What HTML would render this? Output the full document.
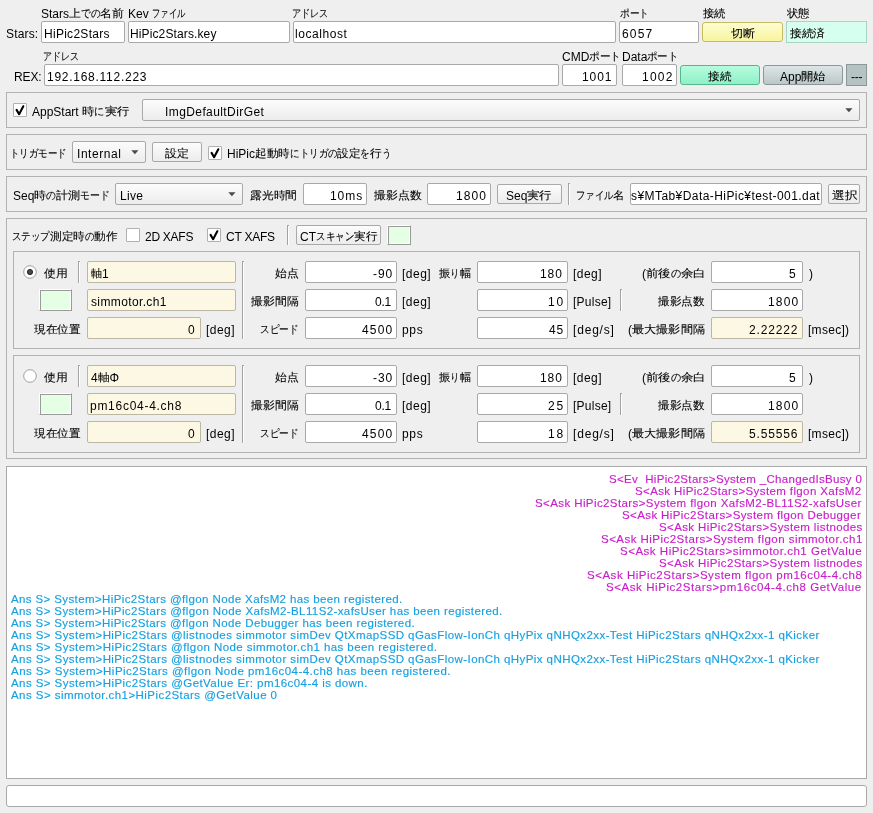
<!DOCTYPE html>
<html><head><meta charset="utf-8"><style>
html,body{margin:0;padding:0;}
body{width:873px;height:813px;background:#efefef;position:relative;overflow:hidden;font-family:"Liberation Sans",sans-serif;font-size:12px;color:#000;}
.a{position:absolute;box-sizing:border-box;}
.t{position:absolute;white-space:pre;line-height:14px;font-size:12px;will-change:transform;}
.ed{background:#fff;border:1px solid #a9a9a9;border-radius:2px;}
.ye{background:#fdf8e4;border-color:#bbb7a3;}
.le{border-radius:3px;}
.grp{border:1px solid #b2b2b2;}
.btn,.cmb{border:1px solid #a9a9a9;border-radius:2px;background:linear-gradient(#fcfcfc,#ececec);}
.btny{border:1px solid #c4bc62;border-radius:3px;background:linear-gradient(#fdfdd2,#f8f49e);}
.btng{border:1px solid #52b98a;border-radius:3px;background:linear-gradient(#b6fcde,#8ff0c6);}
.btngr{border:1px solid #8c9898;border-radius:3px;background:linear-gradient(#dde6e6,#bbc7c7);}
.dash{background:#b5c3c3;border:1px solid #8c9898;}
.stat{background:#d6fff0;border:1px solid #a6d6c2;}
.gbox{background:#e4ffe4;border:1px solid #fff;border-right-color:#9a9a9a;border-bottom-color:#9a9a9a;box-shadow:inset 1px 1px #9a9a9a,inset -1px -1px #fff;}
.cb{background:#fff;border:1px solid #b0b0b0;border-radius:1px;}
.vsep{width:2px;border-left:1px solid #a2a2a2;border-top:1px solid #a2a2a2;background:#fff;}
.log{background:#fff;border:1px solid #a9a9a9;}
.j{font-size:11px;-webkit-text-stroke:0.1px currentColor;}
.jb{display:inline-block;position:relative;top:-1px;}
.ji{display:inline-block;transform-origin:0 50%;}
.mg{color:#c81ec8;font-size:11.5px;-webkit-text-stroke:0.15px #c81ec8;}
.bl{color:#15a0e0;font-size:11.5px;-webkit-text-stroke:0.15px #15a0e0;}
</style></head><body>
<div class="t " style="left:40.60px;top:7px;">Stars<span class="jb" style="width:11.84px"><span class="j ji" style="transform:scaleX(1.0764)">上</span></span><span class="jb" style="width:19.42px"><span class="j ji" style="transform:scaleX(0.8827)">での</span></span><span class="jb" style="width:23.68px"><span class="j ji" style="transform:scaleX(1.0764)">名前</span></span></div>
<div class="t " style="left:127.80px;top:7px;">Kev <span class="jb" style="width:33.28px"><span class="j ji" style="transform:scaleX(0.7564)">ファイル</span></span></div>
<div class="t " style="left:292.40px;top:7px;"><span class="jb" style="width:36.58px"><span class="j ji" style="transform:scaleX(0.8314)">アドレス</span></span></div>
<div class="t " style="left:619.70px;top:7px;"><span class="jb" style="width:28.96px"><span class="j ji" style="transform:scaleX(0.8776)">ポート</span></span></div>
<div class="t " style="left:702.60px;top:7px;"><span class="jb" style="width:22.60px"><span class="j ji" style="transform:scaleX(1.0273)">接続</span></span></div>
<div class="t " style="left:786.50px;top:7px;"><span class="jb" style="width:22.70px"><span class="j ji" style="transform:scaleX(1.0318)">状態</span></span></div>
<div class="t " style="left:5.50px;top:27px;letter-spacing:0.160px;">Stars:</div>
<div class="a ed" style="left:41px;top:21px;width:84px;height:22px;"></div>
<div class="t " style="left:43.60px;top:27px;letter-spacing:0.280px;">HiPic2Stars</div>
<div class="a ed" style="left:128px;top:21px;width:162px;height:22px;"></div>
<div class="t " style="left:130.30px;top:27px;letter-spacing:0.121px;">HiPic2Stars.key</div>
<div class="a ed" style="left:293px;top:21px;width:323px;height:22px;"></div>
<div class="t " style="left:295.40px;top:27px;letter-spacing:0.550px;">localhost</div>
<div class="a ed" style="left:619px;top:21px;width:80px;height:22px;"></div>
<div class="t " style="left:621.70px;top:27px;letter-spacing:1.167px;">6057</div>
<div class="a btny" style="left:702px;top:22px;width:81px;height:20px;"></div>
<div class="t " style="left:731.00px;top:27px;"><span class="jb" style="width:24.20px"><span class="j ji" style="transform:scaleX(1.1000)">切断</span></span></div>
<div class="a stat" style="left:786px;top:21px;width:81px;height:22px;"></div>
<div class="t " style="left:790.30px;top:27px;"><span class="jb" style="width:35.20px"><span class="j ji" style="transform:scaleX(1.0667)">接続済</span></span></div>
<div class="t " style="left:43.40px;top:50px;"><span class="jb" style="width:35.78px"><span class="j ji" style="transform:scaleX(0.8132)">アドレス</span></span></div>
<div class="t " style="left:561.70px;top:50px;">CMD<span class="jb" style="width:31.96px"><span class="j ji" style="transform:scaleX(0.9685)">ポート</span></span></div>
<div class="t " style="left:621.70px;top:50px;">Data<span class="jb" style="width:31.46px"><span class="j ji" style="transform:scaleX(0.9533)">ポート</span></span></div>
<div class="t " style="left:13.60px;top:70px;letter-spacing:-0.100px;">REX:</div>
<div class="a ed" style="left:44px;top:64px;width:515px;height:22px;"></div>
<div class="t " style="left:46.90px;top:70px;letter-spacing:0.736px;">192.168.112.223</div>
<div class="a ed" style="left:562px;top:64px;width:55px;height:22px;"></div>
<div class="t " style="left:581.80px;top:70px;letter-spacing:0.933px;">1001</div>
<div class="a ed" style="left:622px;top:64px;width:55px;height:22px;"></div>
<div class="t " style="left:641.80px;top:70px;letter-spacing:1.233px;">1002</div>
<div class="a btng" style="left:680px;top:65px;width:80px;height:20px;"></div>
<div class="t " style="left:708.30px;top:70px;"><span class="jb" style="width:23.20px"><span class="j ji" style="transform:scaleX(1.0545)">接続</span></span></div>
<div class="a btngr" style="left:763px;top:65px;width:80px;height:20px;"></div>
<div class="t " style="left:780.00px;top:70px;">App<span class="jb" style="width:24.60px"><span class="j ji" style="transform:scaleX(1.1182)">開始</span></span></div>
<div class="a dash" style="left:846px;top:64px;width:21px;height:22px;"></div>
<div class="t " style="left:850.50px;top:70px;letter-spacing:-0.300px;">---</div>
<div class="a grp" style="left:6px;top:92px;width:861px;height:36px;"></div>
<div class="a cb" style="left:13px;top:103px;width:14px;height:14px;"></div>
<svg class="a" style="left:13px;top:103px" width="14" height="14" viewBox="0 0 14 14"><path d="M3.6 6.9 L6.1 11.2 L10.3 3.3" fill="none" stroke="#000" stroke-width="2.1" stroke-linejoin="round" stroke-linecap="round"/></svg>
<div class="t " style="left:32.30px;top:105px;">AppStart <span class="jb" style="width:12.39px"><span class="j ji" style="transform:scaleX(1.1261)">時</span></span><span class="jb" style="width:10.16px"><span class="j ji" style="transform:scaleX(0.9234)">に</span></span><span class="jb" style="width:24.77px"><span class="j ji" style="transform:scaleX(1.1261)">実行</span></span></div>
<div class="a cmb" style="left:142px;top:99px;width:718px;height:22px;"></div>
<div class="t " style="left:165.00px;top:105px;letter-spacing:0.407px;">ImgDefaultDirGet</div>
<svg class="a" style="left:845px;top:108px" width="8" height="5" viewBox="0 0 8 5"><path d="M0.3 0.3 L7.5 0.3 L3.9 4.3 Z" fill="#4a4a4a"/></svg>
<div class="a grp" style="left:6px;top:134px;width:861px;height:36px;"></div>
<div class="t " style="left:10.20px;top:147px;"><span class="jb" style="width:56.92px"><span class="j ji" style="transform:scaleX(0.8624)">トリガモード</span></span></div>
<div class="a cmb" style="left:72px;top:141px;width:74px;height:22px;"></div>
<div class="t " style="left:76.50px;top:147px;letter-spacing:0.543px;">Internal</div>
<svg class="a" style="left:131px;top:150px" width="8" height="5" viewBox="0 0 8 5"><path d="M0.3 0.3 L7.5 0.3 L3.9 4.3 Z" fill="#4a4a4a"/></svg>
<div class="a btn" style="left:152px;top:142px;width:50px;height:20px;"></div>
<div class="t " style="left:165.30px;top:147px;"><span class="jb" style="width:23.90px"><span class="j ji" style="transform:scaleX(1.0864)">設定</span></span></div>
<div class="a cb" style="left:208px;top:146px;width:14px;height:14px;"></div>
<svg class="a" style="left:208px;top:146px" width="14" height="14" viewBox="0 0 14 14"><path d="M3.6 6.9 L6.1 11.2 L10.3 3.3" fill="none" stroke="#000" stroke-width="2.1" stroke-linejoin="round" stroke-linecap="round"/></svg>
<div class="t " style="left:226.80px;top:147px;">HiPic<span class="jb" style="width:34.76px"><span class="j ji" style="transform:scaleX(1.0534)">起動時</span></span><span class="jb" style="width:47.51px"><span class="j ji" style="transform:scaleX(0.8638)">にトリガの</span></span><span class="jb" style="width:23.18px"><span class="j ji" style="transform:scaleX(1.0534)">設定</span></span><span class="jb" style="width:9.50px"><span class="j ji" style="transform:scaleX(0.8638)">を</span></span><span class="jb" style="width:11.59px"><span class="j ji" style="transform:scaleX(1.0534)">行</span></span><span class="jb" style="width:9.50px"><span class="j ji" style="transform:scaleX(0.8638)">う</span></span></div>
<div class="a grp" style="left:6px;top:176px;width:861px;height:36px;"></div>
<div class="t " style="left:12.50px;top:189px;">Seq<span class="jb" style="width:12.04px"><span class="j ji" style="transform:scaleX(1.0941)">時</span></span><span class="jb" style="width:9.87px"><span class="j ji" style="transform:scaleX(0.8972)">の</span></span><span class="jb" style="width:24.07px"><span class="j ji" style="transform:scaleX(1.0941)">計測</span></span><span class="jb" style="width:29.61px"><span class="j ji" style="transform:scaleX(0.8972)">モード</span></span></div>
<div class="a cmb" style="left:115px;top:183px;width:128px;height:22px;"></div>
<div class="t " style="left:119.70px;top:189px;letter-spacing:0.300px;">Live</div>
<svg class="a" style="left:228px;top:192px" width="8" height="5" viewBox="0 0 8 5"><path d="M0.3 0.3 L7.5 0.3 L3.9 4.3 Z" fill="#4a4a4a"/></svg>
<div class="t " style="left:250.00px;top:189px;"><span class="jb" style="width:47.10px"><span class="j ji" style="transform:scaleX(1.0705)">露光時間</span></span></div>
<div class="a ed" style="left:303px;top:183px;width:64px;height:22px;"></div>
<div class="t " style="left:330.20px;top:189px;letter-spacing:0.933px;">10ms</div>
<div class="t " style="left:373.90px;top:189px;"><span class="jb" style="width:47.60px"><span class="j ji" style="transform:scaleX(1.0818)">撮影点数</span></span></div>
<div class="a ed" style="left:427px;top:183px;width:64px;height:22px;"></div>
<div class="t " style="left:456.00px;top:189px;letter-spacing:1.100px;">1800</div>
<div class="a btn" style="left:497px;top:184px;width:65px;height:20px;"></div>
<div class="t " style="left:506.00px;top:189px;">Seq<span class="jb" style="width:24.80px"><span class="j ji" style="transform:scaleX(1.1273)">実行</span></span></div>
<div class="a vsep" style="left:568px;top:183px;height:22px"></div>
<div class="t " style="left:576.00px;top:189px;"><span class="jb" style="width:37.46px"><span class="j ji" style="transform:scaleX(0.8514)">ファイル</span></span><span class="jb" style="width:11.42px"><span class="j ji" style="transform:scaleX(1.0382)">名</span></span></div>
<div class="a ed" style="left:630px;top:183px;width:192px;height:22px;"></div>
<div class="t " style="left:630.70px;top:189px;letter-spacing:0.431px;">s¥MTab¥Data-HiPic¥test-001.dat</div>
<div class="a btn" style="left:828px;top:184px;width:32px;height:20px;"></div>
<div class="t " style="left:832.00px;top:189px;"><span class="jb" style="width:25.40px"><span class="j ji" style="transform:scaleX(1.1545)">選択</span></span></div>
<div class="a grp" style="left:6px;top:218px;width:861px;height:241px;"></div>
<div class="t " style="left:12.20px;top:230px;"><span class="jb" style="width:37.99px"><span class="j ji" style="transform:scaleX(0.8634)">ステップ</span></span><span class="jb" style="width:34.75px"><span class="j ji" style="transform:scaleX(1.0529)">測定時</span></span><span class="jb" style="width:9.50px"><span class="j ji" style="transform:scaleX(0.8634)">の</span></span><span class="jb" style="width:23.16px"><span class="j ji" style="transform:scaleX(1.0529)">動作</span></span></div>
<div class="a cb" style="left:126px;top:228px;width:14px;height:14px;"></div>
<div class="t " style="left:144.90px;top:230px;letter-spacing:-0.267px;">2D XAFS</div>
<div class="a cb" style="left:207px;top:228px;width:14px;height:14px;"></div>
<svg class="a" style="left:207px;top:228px" width="14" height="14" viewBox="0 0 14 14"><path d="M3.6 6.9 L6.1 11.2 L10.3 3.3" fill="none" stroke="#000" stroke-width="2.1" stroke-linejoin="round" stroke-linecap="round"/></svg>
<div class="t " style="left:225.70px;top:230px;letter-spacing:-0.233px;">CT XAFS</div>
<div class="a vsep" style="left:287px;top:225px;height:20px"></div>
<div class="a btn" style="left:296px;top:225px;width:85px;height:20px;"></div>
<div class="t " style="left:299.60px;top:230px;">CT<span class="jb" style="width:38.07px"><span class="j ji" style="transform:scaleX(0.8652)">スキャン</span></span><span class="jb" style="width:23.21px"><span class="j ji" style="transform:scaleX(1.0551)">実行</span></span></div>
<div class="a gbox" style="left:387px;top:225px;width:24px;height:20px;"></div>
<div class="a grp" style="left:13px;top:251px;width:847px;height:98px;"></div>
<svg class="a" style="left:23px;top:265px" width="14" height="14" viewBox="0 0 14 14"><circle cx="7" cy="7" r="6.3" fill="#fff" stroke="#969696" stroke-width="0.9"/><circle cx="7" cy="7" r="2.6" fill="#4a4a4a" stroke="#1a1a1a" stroke-width="0.9"/></svg>
<div class="t " style="left:43.70px;top:267px;"><span class="jb" style="width:23.70px"><span class="j ji" style="transform:scaleX(1.0773)">使用</span></span></div>
<div class="a vsep" style="left:78px;top:261px;height:22px"></div>
<div class="a ed ye" style="left:87px;top:261px;width:149px;height:22px;"></div>
<div class="t " style="left:90.60px;top:267px;"><span class="jb" style="width:11.10px"><span class="j ji" style="transform:scaleX(1.0091)">軸</span></span>1</div>
<div class="a gbox" style="left:39px;top:289px;width:33px;height:22px;"></div>
<div class="a ed ye" style="left:87px;top:289px;width:149px;height:22px;"></div>
<div class="t " style="left:90.60px;top:295px;letter-spacing:0.373px;">simmotor.ch1</div>
<div class="t " style="left:34.00px;top:323px;"><span class="jb" style="width:46.40px"><span class="j ji" style="transform:scaleX(1.0545)">現在位置</span></span></div>
<div class="a ed ye" style="left:87px;top:317px;width:114px;height:22px;"></div>
<div class="t " style="left:188.20px;top:323px;">0</div>
<div class="t " style="left:206.30px;top:323px;letter-spacing:0.475px;">[deg]</div>
<div class="a vsep" style="left:242px;top:261px;height:78px"></div>
<div class="t " style="left:275.30px;top:267px;"><span class="jb" style="width:23.70px"><span class="j ji" style="transform:scaleX(1.0773)">始点</span></span></div>
<div class="t " style="left:251.40px;top:295px;"><span class="jb" style="width:47.60px"><span class="j ji" style="transform:scaleX(1.0818)">撮影間隔</span></span></div>
<div class="t " style="left:260.40px;top:323px;"><span class="jb" style="width:38.68px"><span class="j ji" style="transform:scaleX(0.8791)">スピード</span></span></div>
<div class="a ed" style="left:305px;top:261px;width:92px;height:22px;"></div>
<div class="t " style="left:373.20px;top:267px;letter-spacing:0.900px;">-90</div>
<div class="a ed" style="left:305px;top:289px;width:92px;height:22px;"></div>
<div class="t " style="left:374.50px;top:295px;letter-spacing:-0.250px;">0.1</div>
<div class="a ed" style="left:305px;top:317px;width:92px;height:22px;"></div>
<div class="t " style="left:362.20px;top:323px;letter-spacing:1.167px;">4500</div>
<div class="t " style="left:402.40px;top:267px;letter-spacing:0.500px;">[deg]</div>
<div class="t " style="left:402.40px;top:295px;letter-spacing:0.500px;">[deg]</div>
<div class="t " style="left:402.40px;top:323px;letter-spacing:0.700px;">pps</div>
<div class="t " style="left:438.70px;top:267px;"><span class="jb" style="width:11.28px"><span class="j ji" style="transform:scaleX(1.0258)">振</span></span><span class="jb" style="width:9.25px"><span class="j ji" style="transform:scaleX(0.8411)">り</span></span><span class="jb" style="width:11.28px"><span class="j ji" style="transform:scaleX(1.0258)">幅</span></span></div>
<div class="a ed" style="left:477px;top:261px;width:91px;height:22px;"></div>
<div class="t " style="left:540.10px;top:267px;letter-spacing:0.950px;">180</div>
<div class="a ed" style="left:477px;top:289px;width:91px;height:22px;"></div>
<div class="t " style="left:547.50px;top:295px;letter-spacing:1.800px;">10</div>
<div class="a ed" style="left:477px;top:317px;width:91px;height:22px;"></div>
<div class="t " style="left:548.50px;top:323px;letter-spacing:0.800px;">45</div>
<div class="t " style="left:573.40px;top:267px;letter-spacing:0.450px;">[deg]</div>
<div class="t " style="left:573.40px;top:295px;letter-spacing:0.250px;">[Pulse]</div>
<div class="t " style="left:573.40px;top:323px;letter-spacing:0.817px;">[deg/s]</div>
<div class="a vsep" style="left:620px;top:289px;height:22px"></div>
<div class="t " style="left:641.50px;top:267px;">(<span class="jb" style="width:24.95px"><span class="j ji" style="transform:scaleX(1.1339)">前後</span></span><span class="jb" style="width:10.23px"><span class="j ji" style="transform:scaleX(0.9298)">の</span></span><span class="jb" style="width:24.95px"><span class="j ji" style="transform:scaleX(1.1339)">余白</span></span></div>
<div class="t " style="left:658.00px;top:295px;"><span class="jb" style="width:46.60px"><span class="j ji" style="transform:scaleX(1.0591)">撮影点数</span></span></div>
<div class="t " style="left:627.70px;top:323px;">(<span class="jb" style="width:72.90px"><span class="j ji" style="transform:scaleX(1.1045)">最大撮影間隔</span></span></div>
<div class="a ed" style="left:711px;top:261px;width:92px;height:22px;"></div>
<div class="t " style="left:789.20px;top:267px;">5</div>
<div class="a ed" style="left:711px;top:289px;width:92px;height:22px;"></div>
<div class="t " style="left:767.60px;top:295px;letter-spacing:1.167px;">1800</div>
<div class="a ed ye" style="left:711px;top:317px;width:92px;height:22px;"></div>
<div class="t " style="left:749.00px;top:323px;letter-spacing:0.850px;">2.22222</div>
<div class="t " style="left:809.00px;top:267px;">)</div>
<div class="t " style="left:808.00px;top:323px;letter-spacing:0.283px;">[msec])</div>
<div class="a grp" style="left:13px;top:355px;width:847px;height:98px;"></div>
<svg class="a" style="left:23px;top:369px" width="14" height="14" viewBox="0 0 14 14"><circle cx="7" cy="7" r="6.3" fill="#fff" stroke="#969696" stroke-width="0.9"/></svg>
<div class="t " style="left:43.70px;top:371px;"><span class="jb" style="width:23.70px"><span class="j ji" style="transform:scaleX(1.0773)">使用</span></span></div>
<div class="a vsep" style="left:78px;top:365px;height:22px"></div>
<div class="a ed ye" style="left:87px;top:365px;width:149px;height:22px;"></div>
<div class="t " style="left:90.60px;top:371px;">4<span class="jb" style="width:11.70px"><span class="j ji" style="transform:scaleX(1.0636)">軸</span></span>Φ</div>
<div class="a gbox" style="left:39px;top:393px;width:33px;height:22px;"></div>
<div class="a ed ye" style="left:87px;top:393px;width:149px;height:22px;"></div>
<div class="t " style="left:89.60px;top:399px;letter-spacing:0.725px;">pm16c04-4.ch8</div>
<div class="t " style="left:34.00px;top:427px;"><span class="jb" style="width:46.40px"><span class="j ji" style="transform:scaleX(1.0545)">現在位置</span></span></div>
<div class="a ed ye" style="left:87px;top:421px;width:114px;height:22px;"></div>
<div class="t " style="left:188.20px;top:427px;">0</div>
<div class="t " style="left:206.30px;top:427px;letter-spacing:0.475px;">[deg]</div>
<div class="a vsep" style="left:242px;top:365px;height:78px"></div>
<div class="t " style="left:275.30px;top:371px;"><span class="jb" style="width:23.70px"><span class="j ji" style="transform:scaleX(1.0773)">始点</span></span></div>
<div class="t " style="left:251.40px;top:399px;"><span class="jb" style="width:47.60px"><span class="j ji" style="transform:scaleX(1.0818)">撮影間隔</span></span></div>
<div class="t " style="left:260.40px;top:427px;"><span class="jb" style="width:38.68px"><span class="j ji" style="transform:scaleX(0.8791)">スピード</span></span></div>
<div class="a ed" style="left:305px;top:365px;width:92px;height:22px;"></div>
<div class="t " style="left:373.20px;top:371px;letter-spacing:0.900px;">-30</div>
<div class="a ed" style="left:305px;top:393px;width:92px;height:22px;"></div>
<div class="t " style="left:374.50px;top:399px;letter-spacing:-0.250px;">0.1</div>
<div class="a ed" style="left:305px;top:421px;width:92px;height:22px;"></div>
<div class="t " style="left:362.20px;top:427px;letter-spacing:1.167px;">4500</div>
<div class="t " style="left:402.40px;top:371px;letter-spacing:0.500px;">[deg]</div>
<div class="t " style="left:402.40px;top:399px;letter-spacing:0.500px;">[deg]</div>
<div class="t " style="left:402.40px;top:427px;letter-spacing:0.700px;">pps</div>
<div class="t " style="left:438.70px;top:371px;"><span class="jb" style="width:11.28px"><span class="j ji" style="transform:scaleX(1.0258)">振</span></span><span class="jb" style="width:9.25px"><span class="j ji" style="transform:scaleX(0.8411)">り</span></span><span class="jb" style="width:11.28px"><span class="j ji" style="transform:scaleX(1.0258)">幅</span></span></div>
<div class="a ed" style="left:477px;top:365px;width:91px;height:22px;"></div>
<div class="t " style="left:540.10px;top:371px;letter-spacing:0.950px;">180</div>
<div class="a ed" style="left:477px;top:393px;width:91px;height:22px;"></div>
<div class="t " style="left:547.50px;top:399px;letter-spacing:1.800px;">25</div>
<div class="a ed" style="left:477px;top:421px;width:91px;height:22px;"></div>
<div class="t " style="left:547.50px;top:427px;letter-spacing:1.800px;">18</div>
<div class="t " style="left:573.40px;top:371px;letter-spacing:0.450px;">[deg]</div>
<div class="t " style="left:573.40px;top:399px;letter-spacing:0.250px;">[Pulse]</div>
<div class="t " style="left:573.40px;top:427px;letter-spacing:0.817px;">[deg/s]</div>
<div class="a vsep" style="left:620px;top:393px;height:22px"></div>
<div class="t " style="left:641.50px;top:371px;">(<span class="jb" style="width:24.95px"><span class="j ji" style="transform:scaleX(1.1339)">前後</span></span><span class="jb" style="width:10.23px"><span class="j ji" style="transform:scaleX(0.9298)">の</span></span><span class="jb" style="width:24.95px"><span class="j ji" style="transform:scaleX(1.1339)">余白</span></span></div>
<div class="t " style="left:658.00px;top:399px;"><span class="jb" style="width:46.60px"><span class="j ji" style="transform:scaleX(1.0591)">撮影点数</span></span></div>
<div class="t " style="left:627.70px;top:427px;">(<span class="jb" style="width:72.90px"><span class="j ji" style="transform:scaleX(1.1045)">最大撮影間隔</span></span></div>
<div class="a ed" style="left:711px;top:365px;width:92px;height:22px;"></div>
<div class="t " style="left:789.20px;top:371px;">5</div>
<div class="a ed" style="left:711px;top:393px;width:92px;height:22px;"></div>
<div class="t " style="left:767.60px;top:399px;letter-spacing:1.167px;">1800</div>
<div class="a ed ye" style="left:711px;top:421px;width:92px;height:22px;"></div>
<div class="t " style="left:749.00px;top:427px;letter-spacing:0.850px;">5.55556</div>
<div class="t " style="left:809.00px;top:371px;">)</div>
<div class="t " style="left:808.00px;top:427px;letter-spacing:0.283px;">[msec])</div>
<div class="a log" style="left:6px;top:466px;width:861px;height:313px;"></div>
<div class="t mg" style="left:609.30px;top:472px;letter-spacing:0.328px;">S&lt;Ev  HiPic2Stars&gt;System _ChangedIsBusy 0</div>
<div class="t mg" style="left:635.40px;top:484px;letter-spacing:0.389px;">S&lt;Ask HiPic2Stars&gt;System flgon XafsM2</div>
<div class="t mg" style="left:535.40px;top:496px;letter-spacing:0.404px;">S&lt;Ask HiPic2Stars&gt;System flgon XafsM2-BL11S2-xafsUser</div>
<div class="t mg" style="left:622.40px;top:508px;letter-spacing:0.395px;">S&lt;Ask HiPic2Stars&gt;System flgon Debugger</div>
<div class="t mg" style="left:658.50px;top:520px;letter-spacing:0.391px;">S&lt;Ask HiPic2Stars&gt;System listnodes</div>
<div class="t mg" style="left:600.70px;top:532px;letter-spacing:0.469px;">S&lt;Ask HiPic2Stars&gt;System flgon simmotor.ch1</div>
<div class="t mg" style="left:620.00px;top:544px;letter-spacing:0.511px;">S&lt;Ask HiPic2Stars&gt;simmotor.ch1 GetValue</div>
<div class="t mg" style="left:658.50px;top:556px;letter-spacing:0.391px;">S&lt;Ask HiPic2Stars&gt;System listnodes</div>
<div class="t mg" style="left:587.00px;top:568px;letter-spacing:0.521px;">S&lt;Ask HiPic2Stars&gt;System flgon pm16c04-4.ch8</div>
<div class="t mg" style="left:606.30px;top:580px;letter-spacing:0.567px;">S&lt;Ask HiPic2Stars&gt;pm16c04-4.ch8 GetValue</div>
<div class="t bl" style="left:11.30px;top:592px;letter-spacing:0.386px;">Ans S&gt; System&gt;HiPic2Stars @flgon Node XafsM2 has been registered.</div>
<div class="t bl" style="left:11.30px;top:604px;letter-spacing:0.396px;">Ans S&gt; System&gt;HiPic2Stars @flgon Node XafsM2-BL11S2-xafsUser has been registered.</div>
<div class="t bl" style="left:11.30px;top:616px;letter-spacing:0.389px;">Ans S&gt; System&gt;HiPic2Stars @flgon Node Debugger has been registered.</div>
<div class="t bl" style="left:11.30px;top:628px;letter-spacing:0.427px;">Ans S&gt; System&gt;HiPic2Stars @listnodes simmotor simDev QtXmapSSD qGasFlow-IonCh qHyPix qNHQx2xx-Test HiPic2Stars qNHQx2xx-1 qKicker</div>
<div class="t bl" style="left:11.30px;top:640px;letter-spacing:0.430px;">Ans S&gt; System&gt;HiPic2Stars @flgon Node simmotor.ch1 has been registered.</div>
<div class="t bl" style="left:11.30px;top:652px;letter-spacing:0.427px;">Ans S&gt; System&gt;HiPic2Stars @listnodes simmotor simDev QtXmapSSD qGasFlow-IonCh qHyPix qNHQx2xx-Test HiPic2Stars qNHQx2xx-1 qKicker</div>
<div class="t bl" style="left:11.30px;top:664px;letter-spacing:0.461px;">Ans S&gt; System&gt;HiPic2Stars @flgon Node pm16c04-4.ch8 has been registered.</div>
<div class="t bl" style="left:11.30px;top:676px;letter-spacing:0.433px;">Ans S&gt; System&gt;HiPic2Stars @GetValue Er: pm16c04-4 is down.</div>
<div class="t bl" style="left:11.30px;top:688px;letter-spacing:0.445px;">Ans S&gt; simmotor.ch1&gt;HiPic2Stars @GetValue 0</div>
<div class="a ed le" style="left:6px;top:785px;width:861px;height:22px;"></div>
</body></html>
